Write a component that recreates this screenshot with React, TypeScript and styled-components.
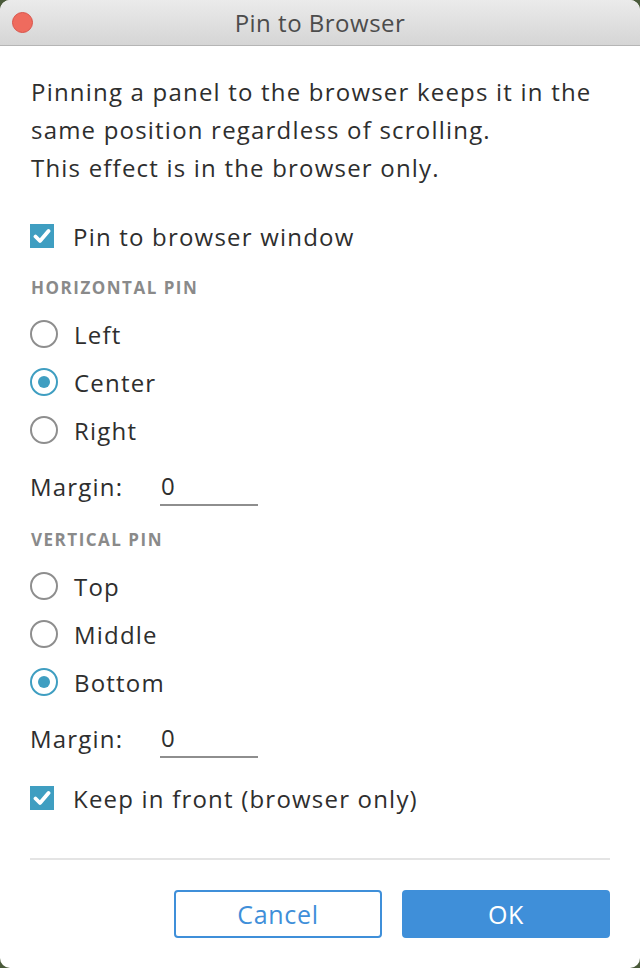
import styled, { createGlobalStyle } from "styled-components";

const Global = createGlobalStyle`
  html, body {
    margin: 0;
    padding: 0;
    background: #4a5a3a;
  }
  * {
    box-sizing: border-box;
  }
`;

const Window = styled.div`
  width: 640px;
  height: 968px;
  background: #ffffff;
  border-radius: 10px;
  overflow: hidden;
  display: flex;
  flex-direction: column;
  font-family: "Open Sans", "Noto Sans", sans-serif;
  color: #2e2e2e;
`;

const TitleBar = styled.div`
  height: 46px;
  flex: none;
  position: relative;
  display: flex;
  align-items: center;
  justify-content: center;
  background: linear-gradient(#ebebeb, #d5d5d5);
  border-bottom: 1px solid #b5b5b5;
  font-family: "Open Sans", sans-serif;
  font-size: 24px;
  letter-spacing: 0.5px;
  color: #4c4c4c;
`;

const CloseDot = styled.span`
  position: absolute;
  left: 12px;
  top: 12px;
  width: 21px;
  height: 21px;
  border-radius: 50%;
  background: #ef6b5e;
  border: 1px solid #d9534a;
`;

const Body = styled.div`
  flex: 1;
  display: flex;
  flex-direction: column;
  padding: 27px 30px 30px 30px;
  letter-spacing: 1.2px;
`;

const Intro = styled.p`
  margin: 0 0 25px 1px;
  font-size: 24px;
  line-height: 38px;
`;

const Row = styled.label<{ $gap?: number; $top?: number }>`
  height: 48px;
  margin-top: ${(p) => p.$top ?? 0}px;
  display: flex;
  align-items: center;
  gap: ${(p) => p.$gap ?? 16}px;
  font-size: 24px;
`;

const Check = styled.span`
  width: 24px;
  height: 24px;
  background: #3f9ec1;
  display: flex;
  align-items: center;
  justify-content: center;
`;

const Radio = styled.span<{ $on?: boolean }>`
  width: 28px;
  height: 28px;
  border-radius: 50%;
  border: 2px solid ${(p) => (p.$on ? "#3f9ec1" : "#8e8e8e")};
  display: flex;
  align-items: center;
  justify-content: center;
  &::after {
    content: "";
    width: 12px;
    height: 12px;
    border-radius: 50%;
    background: ${(p) => (p.$on ? "#3f9ec1" : "transparent")};
  }
`;

const Section = styled.div`
  height: 20px;
  line-height: 20px;
  margin: 18px 0 12px 1px;
  font-size: 17px;
  font-weight: 700;
  letter-spacing: 1.5px;
  color: #8a8a8a;
`;

const MarginRow = styled.div`
  height: 48px;
  display: flex;
  align-items: center;
  font-size: 24px;
  margin: 8px 0 2px 0;
`;

const MarginLabel = styled.span`
  width: 130px;
`;

const MarginField = styled.span`
  width: 98px;
  height: 40px;
  padding-left: 1px;
  border-bottom: 2px solid #8e8e8e;
  display: flex;
  align-items: center;
`;

const Spacer = styled.div`
  flex: 1;
`;

const Divider = styled.hr`
  margin: 0;
  border: none;
  border-top: 2px solid #e4e4e4;
`;

const Buttons = styled.div`
  display: flex;
  justify-content: flex-end;
  gap: 20px;
  margin-top: 30px;
`;

const Button = styled.button<{ $primary?: boolean }>`
  width: 208px;
  height: 48px;
  border-radius: 4px;
  font-family: "Open Sans", sans-serif;
  font-size: 25px;
  letter-spacing: 0.7px;
  border: 2px solid #3f8fd9;
  background: ${(p) => (p.$primary ? "#3f8fd9" : "#ffffff")};
  color: ${(p) => (p.$primary ? "#ffffff" : "#3f8fd9")};
`;

function Tick() {
  return (
    <svg width="18" height="16" viewBox="0 0 18 16">
      <path
        d="M2.5 8.5 L7 13 L15.5 3"
        fill="none"
        stroke="#ffffff"
        strokeWidth="3.8"
        strokeLinecap="round"
        strokeLinejoin="round"
      />
    </svg>
  );
}

export default function App() {
  return (
    <>
      <Global />
      <Window>
        <TitleBar>
          <CloseDot />
          Pin to Browser
        </TitleBar>
        <Body>
          <Intro>
            Pinning a panel to the browser keeps it in the
            <br />
            same position regardless of scrolling.
            <br />
            This effect is in the browser only.
          </Intro>
          <Row $gap={19}>
            <Check>
              <Tick />
            </Check>
            Pin to browser window
          </Row>
          <Section>HORIZONTAL PIN</Section>
          <Row>
            <Radio />
            Left
          </Row>
          <Row>
            <Radio $on />
            Center
          </Row>
          <Row>
            <Radio />
            Right
          </Row>
          <MarginRow>
            <MarginLabel>Margin:</MarginLabel>
            <MarginField>0</MarginField>
          </MarginRow>
          <Section>VERTICAL PIN</Section>
          <Row>
            <Radio />
            Top
          </Row>
          <Row>
            <Radio />
            Middle
          </Row>
          <Row>
            <Radio $on />
            Bottom
          </Row>
          <MarginRow>
            <MarginLabel>Margin:</MarginLabel>
            <MarginField>0</MarginField>
          </MarginRow>
          <Row $gap={19} $top={10}>
            <Check>
              <Tick />
            </Check>
            Keep in front (browser only)
          </Row>
          <Spacer />
          <Divider />
          <Buttons>
            <Button>Cancel</Button>
            <Button $primary>OK</Button>
          </Buttons>
        </Body>
      </Window>
    </>
  );
}
